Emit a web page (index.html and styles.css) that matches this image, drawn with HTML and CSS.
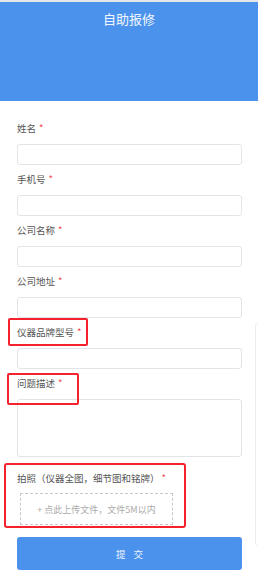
FILE: index.html
```html
<!DOCTYPE html>
<html lang="zh">
<head>
<meta charset="utf-8">
<link rel="stylesheet" href="styles.css">
</head>
<body>
<div class="page">
  <header class="header"><h1 class="title">自助报修</h1></header>
  <form class="form">
    <div class="field">
      <div class="label">姓名<span class="req">*</span></div>
      <div class="input"></div>
    </div>
    <div class="field">
      <div class="label">手机号<span class="req">*</span></div>
      <div class="input"></div>
    </div>
    <div class="field">
      <div class="label">公司名称<span class="req">*</span></div>
      <div class="input"></div>
    </div>
    <div class="field">
      <div class="label">公司地址<span class="req">*</span></div>
      <div class="input"></div>
    </div>
    <div class="field">
      <div class="label mark mark-a">仪器品牌型号<span class="req">*</span></div>
      <div class="input"></div>
    </div>
    <div class="field">
      <div class="label mark mark-b">问题描述<span class="req">*</span></div>
      <div class="input textarea"></div>
    </div>
    <div class="field photo">
      <div class="mark-c"></div>
      <div class="label">拍照（仪器全图，细节图和铭牌）<span class="req wide">*</span></div>
      <div class="upload">+ 点此上传文件，文件5M以内</div>
    </div>
    <div class="submit">提交</div>
  </form>
  <div class="side-panel"></div>
</div>
</body>
</html>
```

FILE: styles.css
```css
* { box-sizing: border-box; }
html, body { margin: 0; padding: 0; background: #fff; }
body {
  font-family: "Noto Sans CJK SC", "Noto Sans", sans-serif;
  color: #555;
  width: 258px;
  height: 582px;
  overflow: hidden;
}
.page { position: relative; height: 582px; }
.header {
  border-top: 2px solid #e4e6ea;
  background: #4a92ec;
  height: 101px;
  display: flex;
  justify-content: center;
}
.title {
  margin: 9px 0 0;
  font-size: 13px;
  line-height: 16px;
  font-weight: 400;
  color: #f2f7fe;
}
.form {
  padding: 21px 16px 0 17px;
  display: flex;
  flex-direction: column;
  gap: 8px;
}
.field { position: relative; display: flex; flex-direction: column; }
.label {
  font-size: 9.5px;
  line-height: 12px;
  height: 12px;
  margin-bottom: 10px;
  color: #555;
  white-space: nowrap;
  position: relative;
}
.req { color: #f0474a; margin-left: 3px; }
.req.wide { margin-left: 2px; }
.input {
  height: 21px;
  border: 1px solid #e2e4e8;
  border-radius: 3px;
  background: #fff;
}
.input.textarea { height: 58px; }
.mark::before {
  content: "";
  position: absolute;
  border: 2px solid #f5222d;
  border-radius: 2px;
}
.mark-a::before { left: -9px; top: -8px; width: 76px; height: 24px; }
.mark-b::before { left: -10px; top: -4px; width: 68px; height: 28px; }
.photo { margin-top: 7px; }
.mark-c {
  position: absolute;
  left: -13px;
  top: -9px;
  width: 182px;
  height: 65px;
  border: 2px solid #f5222d;
  border-radius: 3px;
}
.photo .label { margin-bottom: 9px; }
.upload {
  margin-left: 3px;
  width: 153px;
  height: 32px;
  border: 1px dashed #c8c8c8;
  display: flex;
  align-items: center;
  justify-content: center;
  font-size: 9px;
  color: #aaa;
  white-space: nowrap;
}
.submit {
  margin-top: 4px;
  height: 33px;
  border-radius: 3px;
  background: #4a92ec;
  color: #eef5fe;
  font-size: 9.5px;
  letter-spacing: 8px;
  text-indent: 8px;
  display: flex;
  align-items: center;
  justify-content: center;
}
.side-panel {
  position: absolute;
  left: 255px;
  top: 322px;
  width: 10px;
  height: 225px;
  border: 1px solid #ececec;
  border-radius: 4px;
}
```
